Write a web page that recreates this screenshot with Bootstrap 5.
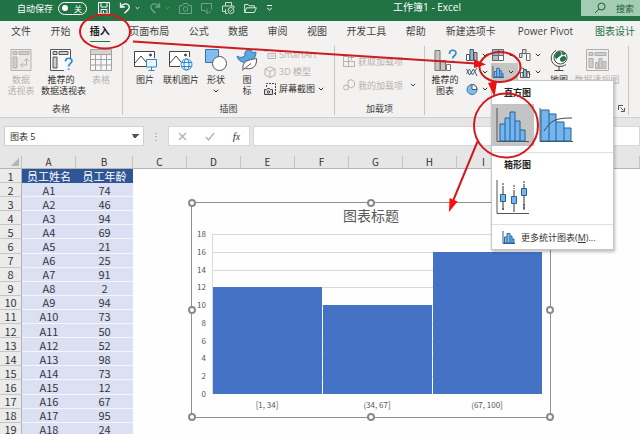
<!DOCTYPE html>
<html lang="zh-CN">
<head>
<meta charset="utf-8">
<meta name="viewport" content="width=device-width, initial-scale=1">
<title>工作簿1 - Excel</title>
<link rel="stylesheet" href="https://cdn.jsdelivr.net/npm/bootstrap@5.3.0/dist/css/bootstrap.min.css">
<style>
  body { font-family: "Open Sans", "Noto Sans CJK SC", sans-serif; font-size: 9px; line-height: 11px; color: #333; background: #fdfdfd; }
  button { border: 0; background: none; padding: 0; color: inherit; font: inherit; }
  svg { display: block; flex: none; }
  .app { min-height: 100vh; max-height: 100vh; }

  .titlebar { background: #217346; color: #fff; padding-bottom: 5px; }
  .titlebar .quick { gap: 9px; padding-left: 17px; height: 16px; }
  .autosave { gap: 5px; margin-right: 2px; }
  .pill { border: 1px solid #fff; border-radius: 7px; width: 29px; height: 13px; padding: 0 4px 0 3px; font-size: 8px; }
  .pill input { appearance: none; width: 6px; height: 6px; border-radius: 50%; background: #fff; margin: 0; }
  .faded { opacity: .35; }
  .doc { font-size: 10px; line-height: 15px; }
  .search { background: #a3cdb3; color: #1c5c39; width: 59px; height: 16px; padding-left: 13px; gap: 10px; }
  .search input { border: 0; background: none; padding: 0; min-width: 0; width: 24px; font-size: 9px; }
  .search input::placeholder { color: #1c5c39; opacity: 1; }

  .tabs { background: #f3f2f1; height: 21px; padding: 0 5px 0 11px; font-size: 10px; line-height: 20px; gap: 20px; }
  .tabs a { color: #444; text-decoration: none; display: block; }
  .tabs a.current { color: #222; font-weight: 700; border-bottom: 2px solid #217346; }
  .tabs a.context { color: #217346; }
  .tabs .late { gap: 22px; }

  .ribbon { background: #f3f2f1; border-bottom: 1px solid #d2d0ce; padding: 4px 0 2px; }
  .ribbon section { border-right: 1px solid #c8c6c4; position: relative; }
  .tools { height: 57px; }
  .tools.tables { padding: 0 1px; }
  .tools.pictures { padding-left: 4px; }
  .tools.tall { padding: 3px 8px 0; }
  .tools.charts { padding-right: 7px; }
  .shots { padding: 0 10px 0 3px; }
  .grouplabel { font-size: 9px; line-height: 12px; text-align: center; margin: 0; font-weight: 400; color: #444; }
  .big { padding-top: 3px; text-align: center; white-space: nowrap; }
  .big svg { margin: 0 auto 3px; }
  .off { color: #b5b3b1; }
  .w26 { width: 26px; } .w28 { width: 28px; } .w34 { width: 34px; } .w36 { width: 36px; } .w40 { width: 40px; } .w48 { width: 48px; }
  .line { height: 17px; gap: 3px; }
  .tall .line { height: 24px; }
  .mini { height: 17px; width: 27px; gap: 4px; padding-left: 1px; }
  .mini.on { background: #c8c6c4; }
  .launcher { position: absolute; right: 3px; bottom: 3px; }
  .dark { color: #444; }

  .gallery { position: absolute; left: 0; top: 17px; width: 123px; z-index: 5; background: #fff; border: 1px solid #c6c6c6; box-shadow: 1px 2px 3px rgba(0,0,0,.25); padding-top: 5px; }
  .gallery h3 { font-size: 9px; line-height: 14px; font-weight: 700; margin: 0 0 0 12px; color: #222; }
  .gallery .choices { height: 48px; padding-top: 4px; gap: 1px; }
  .gallery .choices button { width: 42px; height: 42px; padding: 4px; }
  .gallery .choices .on { background: #c4c4c4; }
  .gallery .part { border-bottom: 1px solid #e1dfdd; height: 67px; margin-bottom: 5px; }
  .gallery .part + .part { margin-bottom: 0; }
  .gallery .more { height: 24px; padding-left: 10px; gap: 6px; white-space: nowrap; }

  .formulabar { background: #e6e6e6; padding: 8px 0 10px 4px; }
  .formulabar > * { height: 20px; }
  .namebox { width: 140px; border: 1px solid #d0d0d0; background-color: #fff; font-size: 9px; padding: 0 5px; color: #333; appearance: none;
    background-image: linear-gradient(45deg, transparent 50%, #555 50%), linear-gradient(-45deg, transparent 50%, #555 50%);
    background-size: 4px 4px; background-position: right 8px center, right 4px center; background-repeat: no-repeat; }
  .grip { width: 24px; color: #888; font-size: 10px; }
  .entry { width: 82px; background: #fff; border: 1px solid #d6d6d6; }
  .fx { font-family: "Liberation Serif", serif; font-size: 11px; }
  .formula { border: 1px solid #d6d6d6; background: #fff; margin-left: 3px; min-width: 0; }

  .sheet { position: relative; overflow: hidden; background: #fefefe; }
  .grid { table-layout: fixed; width: 100%; height: 281px; border-collapse: separate; border-spacing: 0; font-family: "Noto Sans CJK SC", sans-serif; font-size: 11px; line-height: 12px; text-align: center; color: #33363f; }
  .grid th, .grid td { padding: 0; font-weight: 400; white-space: nowrap; }
  .grid thead th { height: 13px; line-height: 10px; font-size: 10px; background: #e6e6e6; border-bottom: 1px solid #b4b4b4; border-right: 1px solid #c4c4c4; color: #333; }
  .grid tbody th { background: #ebebeb; border-right: 1px solid #b4b4b4; border-bottom: 1px solid #c6c6c6; }
  .grid tbody td { background: #dbe0f2; border-bottom: 1px solid #f4f6fc; }
  .grid tbody td.bare { background: transparent; border: 0; }
  .grid tbody tr:first-child td:not(.bare) { background: #2f5597; color: #fff; border: 0; }
  .corner { margin: 0 2px 0 auto; }
  .c-num { width: 22px; } .c-a { width: 54px; } .c-b { width: 57px; } .c-x { width: 54px; }

  .plotframe { position: absolute; left: 191px; top: 46px; width: 360px; height: 216px; border: 1px solid #8f8f8f; background: #fefefe; margin: 0; padding: 2px 8px 0 0; font-family: "Noto Sans CJK SC", sans-serif; font-size: 8px; line-height: 10px; color: #555; }
  .plotframe figcaption { font-size: 14px; line-height: 20px; text-align: center; padding-left: 8px; color: #595959; }
  .plotrow { height: 160px; margin-top: 9px; }
  .ticks { width: 20px; margin: -5px 0; padding-right: 6px; text-align: right; }
  .plot { gap: 1px; border-left: 1px solid #d9d9d9; background: repeating-linear-gradient(#d9d9d9 0 1px, transparent 1px calc(100% / 9)); }
  .plot div { background: #4472c4; flex: 1 1 0; }
  .bins { padding: 6px 0 0 20px; text-align: center; }
  .bins span { flex: 1 1 0; }
  .knob { position: absolute; width: 8px; height: 8px; border: 2px solid #8a8a8a; border-radius: 50%; background: #fff; transform: translate(-50%, -50%); }
  .markup { position: absolute; left: 0; top: 0; z-index: 10; pointer-events: none; }
</style>
<script src="https://cdn.jsdelivr.net/npm/bootstrap@5.3.0/dist/js/bootstrap.bundle.min.js"></script>
</head>
<body class="position-relative overflow-hidden">
<svg width="0" height="0" class="position-absolute">
  <symbol id="chev" viewBox="0 0 6 4"><path d="M.8.800 3 3 5.200.800" fill="none" stroke="currentColor"/></symbol>
  <symbol id="hist" viewBox="0 0 13 13"><path d="M1 0v12.500h12" fill="none" stroke="#555"/><path d="M2.500 12V6h2.500V2.500h3V5h2v3h2v4zM5 6v6M8 5v7M10 8v4" fill="#83bdec" stroke="#1f6cab"/></symbol>
</svg>
<div class="app d-flex flex-column overflow-hidden">

<header class="titlebar d-flex justify-content-between align-items-start">
  <div class="quick d-flex align-items-center">
    <label class="autosave d-flex align-items-center">自动保存
      <span class="pill d-flex align-items-center justify-content-between"><input type="checkbox" role="switch">关</span>
    </label>
    <button aria-label="保存"><svg width="12" height="12" viewBox="0 0 12 12" fill="none" stroke="#fff"><path d="M.5.500h11v11H.5zM3 .5v4.500h6V.5M3 11.500V7.500h6v4M5.500 9v2.500"/></svg></button>
    <button class="d-flex align-items-center gap-1" aria-label="撤消"><svg width="12" height="12" viewBox="0 0 12 12" fill="none" stroke="#fff" stroke-width="1.300"><path d="M1.500.800v4.200h4.300M1.800 4.800C4 1.300 8 1 9.700 3.300c1.600 2.200.3 4-4.200 8"/></svg><svg width="5" height="4"><use href="#chev"/></svg></button>
    <button class="faded d-flex align-items-center gap-1" aria-label="恢复"><svg width="12" height="12" viewBox="0 0 12 12" fill="none" stroke="#fff" stroke-width="1.300"><path d="M10.500.800v4.200H6.200M10.200 4.800C8 1.300 4 1 2.300 3.300c-1.600 2.200-.3 4 4.200 8"/></svg><svg width="5" height="4"><use href="#chev"/></svg></button>
    <button class="faded" aria-label="照相机"><svg width="13" height="12" viewBox="0 0 13 12" fill="none" stroke="#fff"><path d="M.5 3.500h3l1-2h4l1 2h3v8H.5z"/><circle cx="6.500" cy="7" r="2.300"/></svg></button>
    <button class="faded" aria-label="触摸模式"><svg width="12" height="12" viewBox="0 0 12 12" fill="none" stroke="#fff"><path d="M4 8.500H.5v-7h10v6M6 6.500v5M4 9l3 2.500L9.500 9"/></svg></button>
    <button aria-label="打印预览" class="opacity-75"><svg width="13" height="12" viewBox="0 0 13 12" fill="none" stroke="#fff"><path d="M3.500 4V.500h6V4M3 9.500H.500V4h11.500v2M3.500 7v4.500h2"/><circle cx="9" cy="8.500" r="3"/><path d="m7.500 8.500 1 1 2-2"/></svg></button>
    <button aria-label="打开"><svg width="13" height="11" viewBox="0 0 13 11" fill="none" stroke="#d6e8dd"><path d="M.6 9.500V1.500h3.500l1 1.300h5.400v2M.6 9.500l2-4.700h9.800l-2 4.700z"/></svg></button>
    <button aria-label="自定义快速访问工具栏"><svg width="7" height="6" viewBox="0 0 7 6" fill="none" stroke="#fff"><path d="M1 .500h5M1.200 3 3.500 5 5.800 3"/></svg></button>
  </div>
  <div class="doc">工作簿1 - Excel</div>
  <label class="search d-flex align-items-center"><svg width="12" height="12" viewBox="0 0 12 12" fill="none" stroke="#1c5c39"><circle cx="7.500" cy="4.500" r="3.500"/><path d="M5 7 1 11"/></svg><input type="text" placeholder="搜索" aria-label="搜索"></label>
</header>

<nav class="tabs d-flex">
  <ul class="list-unstyled d-flex justify-content-between flex-grow-1 m-0">
    <li><a href="#">文件</a></li><li><a href="#">开始</a></li><li><a href="#" class="current">插入</a></li><li><a href="#">页面布局</a></li><li><a href="#">公式</a></li><li><a href="#">数据</a></li><li><a href="#">审阅</a></li><li><a href="#">视图</a></li><li><a href="#">开发工具</a></li><li><a href="#">帮助</a></li>
  </ul>
  <ul class="late list-unstyled d-flex m-0">
    <li><a href="#">新建选项卡</a></li><li><a href="#">Power Pivot</a></li><li><a href="#" class="context">图表设计</a></li>
  </ul>
</nav>

<div class="ribbon d-flex">
  <section>
    <div class="tools tables d-flex align-items-start">
      <button class="big off w40"><svg width="22" height="22" viewBox="0 0 22 22" fill="#eceae8" stroke="#b5b3b1"><path d="M1 .500h20v21H1z"/><path d="M3 2.500h4v3H3zM9 2.500h10v3H9zM3 8h4v11H3z" fill="#d0cecc"/><path d="M11 16h5.500v-6M13 13.500 10.500 16l2.500 2.500M14 12l2.500-2.500L19 12" fill="none"/></svg>数据<br>透视表</button>
      <button class="big w40"><svg width="23" height="22" viewBox="0 0 23 22" fill="none" stroke="#555"><path d="M14 21.500H.5V.500h20V9" fill="#fafafa"/><path d="M3 2.500h4v3H3zM9 2.500h9v3H9zM3 8h4v11H3z" fill="#d0cecc"/><path d="M15.500 12.500c0-4.500 6.500-4 6.500-.5 0 2.500-3.300 2.500-3.300 5.500M18.700 19.500V21" stroke="#2b88c8" stroke-width="1.600"/></svg>推荐的<br>数据透视表</button>
      <button class="big off w40"><svg width="22" height="22" viewBox="0 0 22 22" fill="#f8f8f8" stroke="#a5a3a1"><path d="M.5.500h21v21H.5z"/><path d="M1 1h20v4H1z" fill="#d5d3d1" stroke="none"/><path d="M.5 5.500h21M.5 10.500h21M.5 16h21M5.500 5v16M11 5v16M16.500 5v16"/></svg>表格</button>
    </div>
    <h2 class="grouplabel">表格</h2>
  </section>

  <section>
    <div class="tools pictures d-flex align-items-start">
      <button class="big w36"><svg width="23" height="22" viewBox="0 0 23 22" fill="none" stroke="#444"><path d="M12 17.500H.5V2.500h20V9" fill="#fff"/><path d="m1 14 6-7 5 6"/><circle cx="16.500" cy="6" r="1" fill="#444"/><path d="M12.500 10.500h10v7.500h-10zM17.500 18v3M14.500 21.500h6" stroke="#2b88c8" fill="#e9f4fb"/></svg>图片</button>
      <button class="big w36"><svg width="24" height="22" viewBox="0 0 24 22" fill="none" stroke="#444"><path d="M11 17.500H.5V2.500h20V8" fill="#fff"/><path d="m1 14 6-7 5 6"/><circle cx="16.500" cy="6" r="1" fill="#444"/><g stroke="#2b88c8"><circle cx="17.500" cy="15.500" r="5.500" fill="#e9f4fb"/><ellipse cx="17.500" cy="15.500" rx="2.500" ry="5.500"/><path d="M12.500 13.500h10M12.500 17.500h10"/></g></svg>联机图片</button>
      <button class="big w34"><svg width="22" height="22" viewBox="0 0 22 22"><path d="M.5.500h13v13H.5z" fill="#83bdec" stroke="#2b79b8"/><circle cx="14.500" cy="14.500" r="7" fill="#fff" stroke="#555"/></svg>形状<svg width="6" height="4" class="mt-1"><use href="#chev"/></svg></button>
      <button class="big w28"><svg width="22" height="22" viewBox="0 0 22 22"><path d="M1 7c3 2 5 2 8-.5C8 3 11 0 14 1c2 .5 2.500 2 3 3l3-1c0 4-1.500 7-5 9s-12 3-14-5z" fill="#5ba7e0" stroke="#2b79b8"/><path d="M7 20C6 12 12 11 20.500 9.500 21 16 18 21 9.500 19.500M6 21.500l9-7" fill="#fff" stroke="#555"/></svg>图<br>标</button>
      <div class="shots">
        <button class="line off d-flex align-items-center"><svg width="12" height="11" viewBox="0 0 12 11" fill="none" stroke="currentColor"><path d="M0 2h4l-2-2M4 4.500h7.500v5H4zM6 7h4"/></svg>SmartArt</button>
        <button class="line off d-flex align-items-center"><svg width="12" height="12" viewBox="0 0 12 12" fill="none" stroke="currentColor"><path d="M6 .800 11 3v6l-5 2.500L1 9V3zM1 3l5 2.500L11 3M6 5.500v6"/></svg>3D 模型</button>
        <button class="line d-flex align-items-center"><svg width="12" height="12" viewBox="0 0 12 12" fill="none" stroke="#444"><path d="M2.500 4V.500h9V9" stroke-dasharray="2 1"/><path d="M.5 6.500h2l1-1h2l1 1h2v5h-8z" fill="#ddd"/><circle cx="4.500" cy="9" r="1.200"/><path d="M11.500 9v3M10 10.500h2"/></svg>屏幕截图<svg width="6" height="4"><use href="#chev"/></svg></button>
      </div>
    </div>
    <h2 class="grouplabel">插图</h2>
  </section>

  <section>
    <div class="tools tall">
      <button class="line d-flex align-items-center off"><svg width="12" height="12" viewBox="0 0 12 12" fill="none" stroke="currentColor"><path d="M.5 1.500h5v10h-5zM.5 6.500h11v5h-11zM8.500 0v5M6 2.500h5"/></svg>获取加载项</button>
      <button class="line d-flex align-items-center off"><svg width="12" height="12" viewBox="0 0 12 12" fill="none" stroke="currentColor"><path d="m5 2 3-1.500L11.500 3v4L8 9 5 7z"/><circle cx="3" cy="8.500" r="2.500"/></svg>我的加载项<svg width="6" height="4" class="dark ms-1"><use href="#chev"/></svg></button>
    </div>
    <h2 class="grouplabel">加载项</h2>
  </section>

  <section>
    <div class="tools charts d-flex align-items-start">
      <button class="big w40"><svg width="23" height="22" viewBox="0 0 23 22" fill="#c8c6c4" stroke="#777"><path d="M1 1.500h5v20H1zM6.500 11.500h5v10h-5z"/><path d="M12.500 15.500h4v6h-4z" fill="#fff"/><path d="M15.500 5c0-5 6.500-4.500 6.500-1 0 3-3.300 2.500-3.300 5.500M18.700 11.500V13" fill="none" stroke="#2b88c8" stroke-width="1.600"/></svg>推荐的<br>图表</button>
      <div class="w26">
        <button class="mini d-flex align-items-center" aria-label="柱形图"><svg width="12" height="12" viewBox="0 0 12 12" stroke="#555"><path d="M.5 5.500h3v6h-3z" fill="#fff"/><path d="M4 .500h3.500v11H4z" fill="#83bdec"/><path d="M8 3.500h3v8H8z" fill="#bbb"/></svg><svg width="6" height="4"><use href="#chev"/></svg></button>
        <button class="mini d-flex align-items-center" aria-label="折线图"><svg width="12" height="12" viewBox="0 0 12 12" fill="none"><path d="m.5 8 3-5 3 6 4.500-7" stroke="#2b79b8"/><path d="m.5 3 3 6 4-6 3.500 7" stroke="#555"/></svg><svg width="6" height="4"><use href="#chev"/></svg></button>
        <button class="mini d-flex align-items-center" aria-label="饼图"><svg width="12" height="12" viewBox="0 0 12 12" stroke="#2b79b8"><circle cx="6" cy="6.500" r="5" fill="#83bdec"/><path d="M6 6.500V1.500a5 5 0 0 1 5 5z" fill="#fff" stroke="#555"/></svg><svg width="6" height="4"><use href="#chev"/></svg></button>
      </div>
      <div>
        <button class="mini d-flex align-items-center" aria-label="树状图"><svg width="12" height="12" viewBox="0 0 12 12" stroke="#666"><path d="M.5.500h6v6h-6z" fill="#83bdec"/><path d="M6.500.500h5v6h-5zM.5 6.500h6v5h-6z" fill="#bbb"/><path d="M6.500 6.500h5v5h-5z" fill="#fff"/></svg><svg width="6" height="4"><use href="#chev"/></svg></button>
        <div class="position-relative">
          <button class="mini on d-flex align-items-center" aria-label="统计图表" aria-expanded="true"><svg width="12" height="12"><use href="#hist"/></svg><svg width="6" height="4"><use href="#chev"/></svg></button>
          <div class="gallery">
            <div class="part"><h3>直方图</h3>
              <div class="choices d-flex">
                <button class="on" aria-label="直方图"><svg width="34" height="34" viewBox="0 0 34 34"><path d="M1 0v33.500h32" fill="none" stroke="#555"/><path d="M4 33V16h5v-6h5V4h5v9h5v9h5v11zM9 16v17M14 10v23M19 13v20M24 22v11" fill="#73b5f0" stroke="#27618f"/></svg></button>
                <button aria-label="排列图"><svg width="34" height="34" viewBox="0 0 34 34"><path d="M1 0v33.500h33" fill="none" stroke="#555"/><path d="M2 33V2h8v4h7v8h8v6h7v13zM10 6v27M17 14v19M25 20v13" fill="#73b5f0" stroke="#27618f"/><path d="M5 23C12 12 17 10 33 10" fill="none" stroke="#444"/></svg></button>
              </div>
            </div>
            <div class="part"><h3>箱形图</h3>
              <div class="choices d-flex">
                <button aria-label="箱形图"><svg width="34" height="34" viewBox="0 0 34 34" fill="#73b5f0" stroke="#27618f"><path d="M1 0v33.500h32" fill="none" stroke="#555"/><path d="M7 7v23M18 10v22M28 4v26" stroke="#333"/><path d="M7 3v4M18 5v4M28 1v3M7 28v3M28 24v6" stroke-dasharray="2 1" stroke="#333"/><path d="M4.500 14.500h5v7h-5zM15.500 16.500h5v7h-5zM25.500 8.500h5v7h-5z"/></svg></button>
              </div>
            </div>
            <button class="more d-flex align-items-center"><svg width="13" height="13"><use href="#hist"/></svg><span>更多统计图表(<u>M</u>)...</span></button>
          </div>
        </div>
      </div>
      <div>
        <button class="mini d-flex align-items-center" aria-label="瀑布图"><svg width="12" height="12" viewBox="0 0 12 12" stroke="#666"><path d="M.5 4.500h2.500v4H.5zM3.500.500H7v4H3.500z" fill="#ddd"/><path d="M7.500 4.500h3.500v7H7.500z" fill="#fff"/></svg><svg width="6" height="4"><use href="#chev"/></svg></button>
        <button class="mini d-flex align-items-center" aria-label="组合图"><svg width="12" height="12" viewBox="0 0 12 12" stroke="#555"><path d="M1.500 6.500h2.500v5H1.500zM8 5.500h2.500v6H8z" fill="#fff"/><path d="M4.500 3.500H7.500v8h-3z" fill="#83bdec"/><path d="m.5 1 5 2 6 6" fill="none"/></svg><svg width="6" height="4"><use href="#chev"/></svg></button>
      </div>
      <button class="big w28"><svg width="19" height="22" viewBox="0 0 19 22" fill="none" stroke="#444"><circle cx="10.500" cy="8.500" r="6.500" fill="#fff"/><path d="M7 4c3-2 4-1 4 1S8 7 7 9 5 8 5 7zM12 8c3-1 4 0 3.500 2S12 13 11 12s-1-3 1-4zM12 3l3 2-2 1z" fill="#217346" stroke="#217346"/><path d="M6 1.500C-1 5-.5 16 9 17.500c3 0 5-.5 7-2M9 17.500V21M4.500 21.500h9"/></svg>地图</button>
      <button class="big off w48"><svg width="23" height="22" viewBox="0 0 23 22" fill="#eee" stroke="#b0aeac"><path d="M.5.500h22v21H.5z"/><path d="M3 3.500h4v3H3zM9 3.500h11v3H9zM3 9.500h4v9H3zM9.500 13.500h3v6h-3zM13 9.500h3v10h-3zM17 12.500h3v7h-3z" fill="#d0cecc"/></svg>数据透视图</button>
    </div>
    <button class="launcher" aria-label="图表选项"><svg width="7" height="7" viewBox="0 0 7 7" fill="none" stroke="#555"><path d="M.5 5V.500H5M2.500 2.500l3 3M6.500 3v3.500H3"/></svg></button>
  </section>
</div>

<div class="formulabar d-flex">
  <select class="namebox rounded-0" aria-label="名称框"><option>图表 5</option></select>
  <span class="grip d-flex align-items-center justify-content-center">⋮</span>
  <div class="entry d-flex align-items-center justify-content-around">
    <button aria-label="取消"><svg width="9" height="9" viewBox="0 0 9 9" stroke="#b0b0b0" stroke-width="1.300"><path d="m1 1 7 7M8 1 1 8"/></svg></button>
    <button aria-label="输入"><svg width="10" height="9" viewBox="0 0 10 9" fill="none" stroke="#b0b0b0" stroke-width="1.300"><path d="m1 5 2.500 3L9 1"/></svg></button>
    <button class="fx fst-italic" aria-label="插入函数">f<small>x</small></button>
  </div>
  <input class="formula flex-grow-1" type="text" aria-label="编辑栏">
</div>

<main class="sheet flex-grow-1">
  <table class="grid">
    <colgroup><col class="c-num"><col class="c-a"><col class="c-b"><col class="c-x"><col class="c-x"><col class="c-x"><col class="c-x"><col class="c-x"><col class="c-x"><col class="c-x"><col class="c-x"><col></colgroup>
    <thead><tr><th><svg class="corner" width="8" height="8" viewBox="0 0 8 8"><path d="M8 0v8H0z" fill="#b4b4b4"/></svg></th><th>A</th><th>B</th><th>C</th><th>D</th><th>E</th><th>F</th><th>G</th><th>H</th><th>I</th><th>J</th><th></th></tr></thead>
    <tbody>
      <tr><th>1</th><td>员工姓名</td><td>员工年龄</td><td class="bare" colspan="9"></td></tr>
      <tr><th>2</th><td>A1</td><td>74</td><td class="bare" colspan="9"></td></tr>
      <tr><th>3</th><td>A2</td><td>46</td><td class="bare" colspan="9"></td></tr>
      <tr><th>4</th><td>A3</td><td>94</td><td class="bare" colspan="9"></td></tr>
      <tr><th>5</th><td>A4</td><td>69</td><td class="bare" colspan="9"></td></tr>
      <tr><th>6</th><td>A5</td><td>21</td><td class="bare" colspan="9"></td></tr>
      <tr><th>7</th><td>A6</td><td>25</td><td class="bare" colspan="9"></td></tr>
      <tr><th>8</th><td>A7</td><td>91</td><td class="bare" colspan="9"></td></tr>
      <tr><th>9</th><td>A8</td><td>2</td><td class="bare" colspan="9"></td></tr>
      <tr><th>10</th><td>A9</td><td>94</td><td class="bare" colspan="9"></td></tr>
      <tr><th>11</th><td>A10</td><td>73</td><td class="bare" colspan="9"></td></tr>
      <tr><th>12</th><td>A11</td><td>50</td><td class="bare" colspan="9"></td></tr>
      <tr><th>13</th><td>A12</td><td>52</td><td class="bare" colspan="9"></td></tr>
      <tr><th>14</th><td>A13</td><td>98</td><td class="bare" colspan="9"></td></tr>
      <tr><th>15</th><td>A14</td><td>73</td><td class="bare" colspan="9"></td></tr>
      <tr><th>16</th><td>A15</td><td>12</td><td class="bare" colspan="9"></td></tr>
      <tr><th>17</th><td>A16</td><td>67</td><td class="bare" colspan="9"></td></tr>
      <tr><th>18</th><td>A17</td><td>95</td><td class="bare" colspan="9"></td></tr>
      <tr><th>19</th><td>A18</td><td>24</td><td class="bare" colspan="9"></td></tr>
    </tbody>
  </table>

  <figure class="plotframe">
    <figcaption>图表标题</figcaption>
    <div class="plotrow d-flex">
      <div class="ticks d-flex flex-column justify-content-between"><span>18</span><span>16</span><span>14</span><span>12</span><span>10</span><span>8</span><span>6</span><span>4</span><span>2</span><span>0</span></div>
      <div class="plot d-flex align-items-end flex-grow-1">
        <div style="height:66.7%"></div><div style="height:55.6%"></div><div style="height:88.9%"></div>
      </div>
    </div>
    <div class="bins d-flex"><span>[1, 34]</span><span>(34, 67]</span><span>(67, 100]</span></div>
    <i class="knob start-0 top-0"></i><i class="knob start-50 top-0"></i><i class="knob start-100 top-0"></i>
    <i class="knob start-0 top-50"></i><i class="knob start-100 top-50"></i>
    <i class="knob start-0 top-100"></i><i class="knob start-50 top-100"></i><i class="knob start-100 top-100"></i>
  </figure>
</main>
</div>

<svg class="markup" width="640" height="434" viewBox="0 0 640 434" fill="none" stroke="#cf1a1f" stroke-width="2">
  <ellipse cx="105" cy="31.500" rx="25" ry="17"/>
  <path d="M133 41.500 476 63.500"/>
  <path d="M486 64.500 474 59v9z" fill="#e8140f" stroke="none"/>
  <ellipse cx="500" cy="67" rx="20.500" ry="15"/>
  <path d="m488 83 9-2-2.500 16z" fill="#e8140f" stroke="none"/>
  <circle cx="506" cy="125.500" r="32"/>
  <path d="M477.500 141.500 453 201"/>
  <path d="m449 212 .5-14 8 3.500z" fill="#ff0d0d" stroke="none"/>
</svg>
</body>
</html>
